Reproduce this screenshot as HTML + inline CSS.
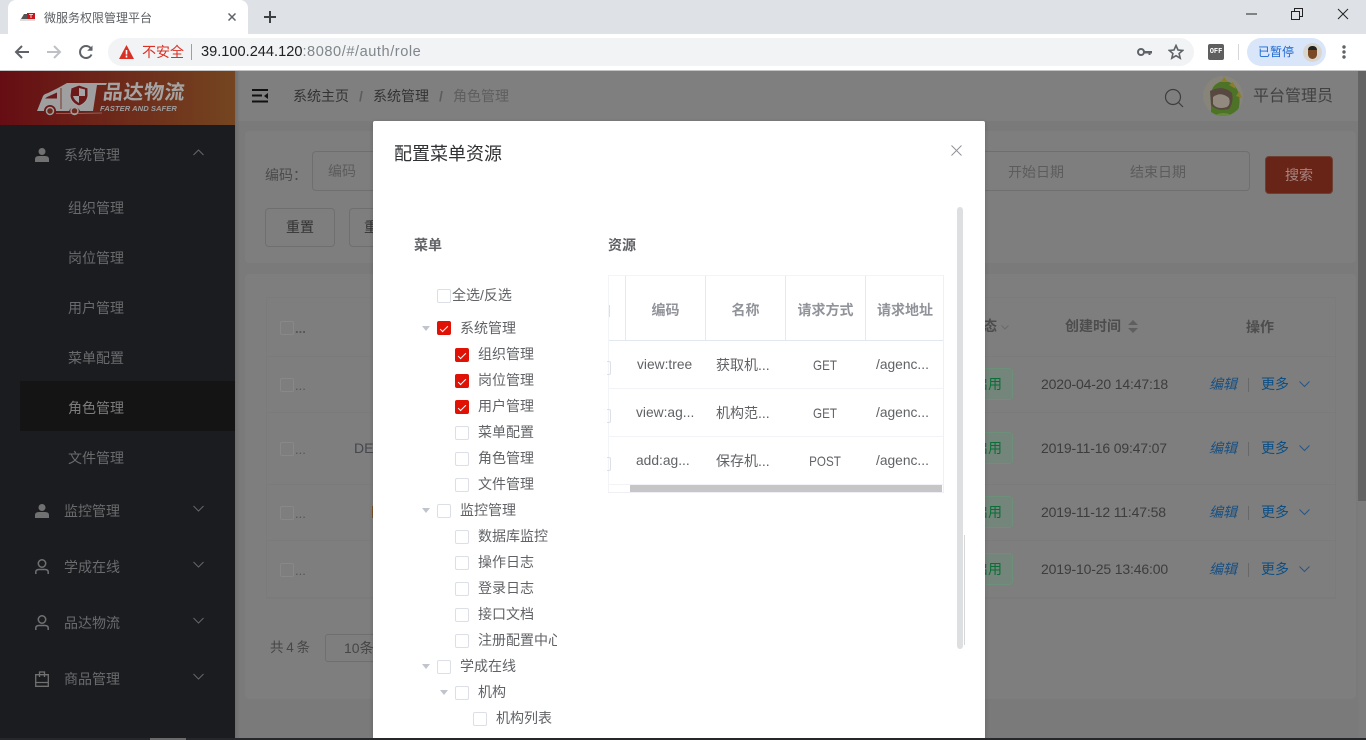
<!DOCTYPE html>
<html lang="zh-CN"><head><meta charset="utf-8"><title>微服务权限管理平台</title>
<style>
*{box-sizing:border-box}
html,body{margin:0;padding:0;width:1366px;height:740px;overflow:hidden;background:#7a7a7a;font-family:"Liberation Sans","Noto Sans CJK SC",sans-serif;font-size:14px}
.a{position:absolute;white-space:nowrap}
.t{position:absolute;white-space:nowrap;line-height:20px}
.side{color:#6a6b6d}
.cb{position:absolute;width:14px;height:14px;border:1px solid #dcdfe6;border-radius:2px;background:#fff}
.cb.on{background:#e01105;border-color:#e01105}
.cb.on:after{content:"";position:absolute;left:4px;top:1.5px;width:3px;height:7px;border:solid #fff;border-width:0 1px 1px 0;transform:rotate(45deg)}
.tr{position:absolute;width:0;height:0;border:4px solid transparent;border-top:5px solid #c0c4cc;border-bottom:0}
.tree{color:#606266;font-size:14px}
.th{color:#909399;font-weight:bold;text-align:center;font-size:14px}
.td{color:#606266;font-size:14px}
.l{font-size:13.8px}
.c{text-align:center;width:78px;font-size:14px;left:786px;transform:scaleX(.83)}
.bcb{position:absolute;width:14px;height:14px;border:1px solid #888;border-radius:2px}
.tag{position:absolute;left:960px;width:53px;height:32px;background:#74857b;border:1px solid #6c9079;border-radius:4px;color:#0a6e36;line-height:30px;text-align:right;padding-right:10px}
.dt{color:#3d3d3d;letter-spacing:-.16px}
.ed{color:#174f82;font-style:italic}
.mo{color:#0b4f85}
</style></head><body>
<!-- Chrome tab strip -->
<div class="a" style="left:0;top:0;width:1366px;height:34px;background:#dee1e6"></div>
<div class="a" style="left:8px;top:0;width:240px;height:34px;background:#fff;border-radius:8px 8px 0 0"></div>
<svg class="a" style="left:20px;top:12px" width="16" height="9" viewBox="0 0 16 9"><path d="M1 7L4 2H7V7Z" fill="#555"/><rect x="7" y="1" width="8" height="6" fill="#c8161d"/><path d="M9 2.500H13M11 2.500V6" stroke="#fff" stroke-width=".8"/><path d="M0 8H15" stroke="#bbb"/></svg>
<div class="t" style="left:44px;top:8px;font-size:12px;color:#5a5d62;line-height:20px">微服务权限管理平台</div>
<svg class="a" style="left:228px;top:13px" width="8" height="8"><path d="M.5 .5L7.500 7.500M7.500 .5L.5 7.500" stroke="#5f6368" stroke-width="1.500"/></svg>
<svg class="a" style="left:264px;top:11px" width="12" height="12"><path d="M6 0V12M0 6H12" stroke="#3c4043" stroke-width="2"/></svg>
<svg class="a" style="left:1246px;top:13px" width="12" height="2"><path d="M0 1H11" stroke="#222" stroke-width="1"/></svg>
<svg class="a" style="left:1291px;top:8px" width="12" height="12" fill="none" stroke="#222"><path d="M.5 3.500H8.500V11.500H.5ZM3.500 3.500V.5H11.500V8.500H8.500"/></svg>
<svg class="a" style="left:1337px;top:8px" width="12" height="12"><path d="M1 1L11 11M11 1L1 11" stroke="#222" stroke-width="1"/></svg>
<!-- Toolbar -->
<div class="a" style="left:0;top:34px;width:1366px;height:36px;background:#fff"></div>
<div class="a" style="left:0;top:70px;width:1366px;height:1px;background:#c4c4c4"></div>
<svg class="a" style="left:14px;top:44px" width="16" height="16" fill="none" stroke="#5f6368" stroke-width="2"><path d="M15 8H2M8 2L2 8L8 14"/></svg>
<svg class="a" style="left:46px;top:44px" width="16" height="16" fill="none" stroke="#bdc1c6" stroke-width="2"><path d="M1 8H14M8 2L14 8L8 14"/></svg>
<svg class="a" style="left:78px;top:44px" width="16" height="16" fill="none" stroke="#5f6368" stroke-width="2"><path d="M13.500 10.500A6 6 0 1 1 12.500 4L14 5.500"/><path d="M14.500 1.500V6.800H9.200Z" fill="#5f6368" stroke="none"/></svg>
<div class="a" style="left:108px;top:38px;width:1086px;height:28px;background:#f1f3f4;border-radius:14px"></div>
<svg class="a" style="left:119px;top:45px" width="15" height="14"><path d="M7.500 0L15 14H0Z" fill="#d93025"/><path d="M7.500 5V9.500M7.500 10.500V12.500" stroke="#fff" stroke-width="1.600"/></svg>
<div class="t" style="left:142px;top:42px;color:#d93025;font-size:14px">不安全</div>
<div class="a" style="left:191px;top:44px;width:1px;height:16px;background:#9aa0a6"></div>
<div class="t" style="left:201px;top:42px;font-size:14.600px;color:#80868b"><span style="color:#202124">39.100.244.120</span><span style="letter-spacing:.55px">:8080/#/auth/role</span></div>
<svg class="a" style="left:1137px;top:47px" width="15" height="10"><circle cx="4" cy="5" r="3" fill="none" stroke="#5f6368" stroke-width="2"/><path d="M6 4H15V6.500H13.500V8H11.500V6.500H6Z" fill="#5f6368"/></svg>
<svg class="a" style="left:1168px;top:44px" width="16" height="16" fill="none" stroke="#5f6368" stroke-width="1.600"><path d="M8 1.500L10 6L14.700 6.400L11.100 9.500L12.200 14.200L8 11.700L3.800 14.200L4.900 9.500L1.300 6.400L6 6Z"/></svg>
<div class="a" style="left:1208px;top:44px;width:16px;height:16px;background:#5f5f5f;border-radius:2px;color:#fff;font:bold 7px/16px 'Liberation Mono',monospace;text-align:center">OFF</div>
<div class="a" style="left:1238px;top:44px;width:1px;height:16px;background:#d5d7da"></div>
<div class="a" style="left:1247px;top:38px;width:79px;height:28px;background:#d9e6f9;border-radius:14px"></div>
<div class="t" style="left:1258px;top:42px;font-size:12px;color:#1a66d4">已暂停</div>
<div class="a" style="left:1303px;top:43px;width:19px;height:19px;border-radius:50%;background:#d9d6d0;overflow:hidden"><div class="a" style="left:5px;top:4px;width:9px;height:12px;background:#7a4a25;border-radius:4px 4px 5px 5px"></div><div class="a" style="left:5px;top:3px;width:9px;height:4px;background:#222;border-radius:4px 4px 0 0"></div></div>
<svg class="a" style="left:1342px;top:44px" width="4" height="16" fill="#5f6368"><circle cx="2" cy="3" r="1.700"/><circle cx="2" cy="8" r="1.700"/><circle cx="2" cy="13" r="1.700"/></svg>

<!-- Page behind mask -->
<div class="a" style="left:235px;top:71px;width:1131px;height:667px;background:#7a7a7a"></div>
<div class="a" style="left:235px;top:71px;width:1123px;height:50px;background:#7f7f7f"></div>
<div class="a" style="left:245px;top:131px;width:1111px;height:132px;background:#7e7e7e;border-radius:4px"></div>
<div class="a" style="left:245px;top:274px;width:1111px;height:425px;background:#7e7e7e;border-radius:4px"></div>
<div class="a" style="left:235px;top:71px;width:5px;height:667px;background:linear-gradient(90deg,#6e6e6e,rgba(122,122,122,0))"></div>
<div class="a" style="left:1358px;top:71px;width:8px;height:430px;background:#636363"></div>
<div class="a" style="left:1358px;top:501px;width:8px;height:237px;background:#7c7c7c"></div>
<!-- Top bar contents -->
<svg class="a" style="left:252px;top:89px" width="17" height="14"><path d="M0 1H16M0 6.500H10M0 12.500H16" stroke="#111" stroke-width="2"/><path d="M16 4V10L12 7Z" fill="#111"/></svg>
<div class="t" style="left:293px;top:86px;color:#333">系统主页</div>
<div class="t" style="left:359px;top:86px;color:#5c5c5c;font-weight:bold">/</div>
<div class="t" style="left:373px;top:86px;color:#333">系统管理</div>
<div class="t" style="left:439px;top:86px;color:#5c5c5c;font-weight:bold">/</div>
<div class="t" style="left:453px;top:86px;color:#5e5e5e">角色管理</div>
<svg class="a" style="left:1164px;top:88px" width="20" height="20" fill="none" stroke="#3e3e3e" stroke-width="1.200"><circle cx="9" cy="9" r="7.500"/><path d="M14.500 14.500L19 19"/></svg>
<svg class="a" style="left:1203px;top:76px" width="40" height="40" viewBox="0 0 40 40"><defs><clipPath id="av"><circle cx="20" cy="20" r="20"/></clipPath></defs><g clip-path="url(#av)"><rect width="40" height="40" fill="#87857a"/><path d="M8 40V22Q7 8 20 5Q32 5 36 18Q38 30 33 40Z" fill="#4d7426"/><path d="M21 1L25 6H18ZM30 6L33 13L26 9ZM36 15L39 22L33 20Z" fill="#8a7d2c"/><path d="M7 15Q20 8 29 17Q31 26 26 33Q14 36 8 29Z" fill="#57493f"/><path d="M10 21Q18 15 26 22Q28 28 24 31Q14 34 10 28Z" fill="#938a7f"/><path d="M11 40Q20 34 30 40Z" fill="#66883a"/></g></svg>
<div class="t" style="left:1253px;top:85px;font-size:16px;color:#414141;line-height:24px">平台管理员</div>
<!-- Search -->
<div class="t" style="left:265px;top:165px;color:#4b4b4b">编码：</div>
<div class="a" style="left:312px;top:151px;width:80px;height:40px;border:1px solid #6f6f6f;border-right:0;border-radius:4px 0 0 4px"></div>
<div class="t" style="left:328px;top:161px;color:#5c5c5c">编码</div>
<div class="a" style="left:980px;top:151px;width:270px;height:40px;border:1px solid #6f6f6f;border-left:0;border-radius:0 4px 4px 0"></div>
<div class="t" style="left:1008px;top:162px;color:#5c5c5c">开始日期</div>
<div class="t" style="left:1130px;top:162px;color:#5c5c5c">结束日期</div>
<div class="a" style="left:1265px;top:156px;width:68px;height:38px;background:#682517;border:1px solid #6e3f33;border-radius:4px;color:#a98480;text-align:center;line-height:36px">搜索</div>
<div class="a" style="left:265px;top:208px;width:70px;height:39px;border:1px solid #6f6f6f;border-radius:4px;color:#333;text-align:center;line-height:37px">重置</div>
<div class="a" style="left:349px;top:208px;width:40px;height:39px;border:1px solid #6f6f6f;border-radius:4px 0 0 4px;border-right:0;color:#333;padding-left:14px;line-height:37px;overflow:hidden">重置</div>
<!-- Data table -->
<div class="a" style="left:266px;top:297px;width:1070px;height:302px;border:1px solid #7b7b7b;border-width:1px 1px 2px 1px"></div>
<div class="a" style="left:266px;top:356px;width:1070px;height:1px;background:#7b7b7b"></div>
<div class="a" style="left:266px;top:412px;width:1070px;height:1px;background:#7b7b7b"></div>
<div class="a" style="left:266px;top:484px;width:1070px;height:1px;background:#7b7b7b"></div>
<div class="a" style="left:266px;top:540px;width:1070px;height:1px;background:#7b7b7b"></div>
<div class="bcb" style="left:280px;top:321px"></div><div class="t" style="left:295px;top:319px;color:#555;font-weight:bold;font-size:13px">...</div>
<div class="bcb" style="left:280px;top:378px"></div><div class="t" style="left:295px;top:376px;color:#555;font-size:13px">...</div>
<div class="bcb" style="left:280px;top:442px"></div><div class="t" style="left:295px;top:440px;color:#555;font-size:13px">...</div>
<div class="bcb" style="left:280px;top:506px"></div><div class="t" style="left:295px;top:504px;color:#555;font-size:13px">...</div>
<div class="bcb" style="left:280px;top:563px"></div><div class="t" style="left:295px;top:561px;color:#555;font-size:13px">...</div>
<div class="t" style="left:354px;top:438px;color:#45474d">DE</div>
<div class="a" style="left:372px;top:506px;width:1px;height:12px;background:#7a5226"></div>
<div class="t" style="left:983px;top:316px;color:#4d4d4d;font-weight:bold">态</div>
<svg class="a" style="left:1001px;top:325px" width="8" height="5" fill="none" stroke="#6a6a6a"><path d="M.5 .5L4 4L7.500 .5"/></svg>
<div class="t" style="left:1065px;top:316px;color:#4d4d4d;font-weight:bold">创建时间</div>
<svg class="a" style="left:1128px;top:320px" width="10" height="13" fill="#5f5f5f"><path d="M5 0L10 5H0ZM5 13L0 8H10Z"/></svg>
<div class="t" style="left:1246px;top:317px;color:#4d4d4d;font-weight:bold">操作</div>
<div class="tag" style="top:368px">启用</div>
<div class="tag" style="top:432px">启用</div>
<div class="tag" style="top:496px">启用</div>
<div class="tag" style="top:553px">启用</div>
<div class="t dt" style="left:1041px;top:374px">2020-04-20 14:47:18</div>
<div class="t dt" style="left:1041px;top:438px">2019-11-16 09:47:07</div>
<div class="t dt" style="left:1041px;top:502px">2019-11-12 11:47:58</div>
<div class="t dt" style="left:1041px;top:559px">2019-10-25 13:46:00</div>
<div class="t ed" style="left:1209px;top:374px">编辑</div><div class="a" style="left:1248px;top:378px;width:1px;height:14px;background:#686868"></div><div class="t mo" style="left:1261px;top:374px">更多</div><svg class="a" style="left:1299px;top:381px" width="11" height="7" fill="none" stroke="#2a5585"><path d="M.5 .5L5.500 5.500L10.500 .5"/></svg>
<div class="t ed" style="left:1209px;top:438px">编辑</div><div class="a" style="left:1248px;top:442px;width:1px;height:14px;background:#686868"></div><div class="t mo" style="left:1261px;top:438px">更多</div><svg class="a" style="left:1299px;top:445px" width="11" height="7" fill="none" stroke="#2a5585"><path d="M.5 .5L5.500 5.500L10.500 .5"/></svg>
<div class="t ed" style="left:1209px;top:502px">编辑</div><div class="a" style="left:1248px;top:506px;width:1px;height:14px;background:#686868"></div><div class="t mo" style="left:1261px;top:502px">更多</div><svg class="a" style="left:1299px;top:509px" width="11" height="7" fill="none" stroke="#2a5585"><path d="M.5 .5L5.500 5.500L10.500 .5"/></svg>
<div class="t ed" style="left:1209px;top:559px">编辑</div><div class="a" style="left:1248px;top:563px;width:1px;height:14px;background:#686868"></div><div class="t mo" style="left:1261px;top:559px">更多</div><svg class="a" style="left:1299px;top:566px" width="11" height="7" fill="none" stroke="#2a5585"><path d="M.5 .5L5.500 5.500L10.500 .5"/></svg>
<div class="t" style="left:270px;top:638px;color:#464646;word-spacing:-1px;font-size:13.5px">共 4 条</div>
<div class="a" style="left:325px;top:634px;width:60px;height:28px;border:1px solid #6f6f6f;border-radius:3px;color:#464646;padding-left:18px;line-height:27px">10条</div>

<!-- Sidebar -->
<div class="a" style="left:0;top:71px;width:235px;height:667px;background:#1b1c20"></div>
<div class="a" style="left:0;top:71px;width:235px;height:54px;background:linear-gradient(90deg,#660d13,#744520)"></div>
<svg class="a" style="left:36px;top:80px" width="74" height="36" viewBox="0 0 74 36"><path d="M1 31L7 16Q8 14 12 13L22 8L31 3H71L70 5H61L57 31H44A6 6 0 0 0 33 31H20A6 6 0 0 0 8 31Z" fill="#9f9f9f"/><path d="M11 17L21 12.500V18.500H9Z" fill="#6a1a1a"/><path d="M25 8V29" stroke="#7a3a28" stroke-width="1"/><path d="M35 8L43 5L52 8V16Q51 23 43 26Q35 23 34 16Z" fill="#6c1919" stroke="#a5a5a5"/><path d="M43 8V16H37Q38 20 43 23V16H49V9.500Z" fill="#a5a5a5"/><circle cx="14" cy="31" r="3.500" fill="#6d2a1c" stroke="#a0a0a0" stroke-width="1.500"/><circle cx="38.500" cy="31" r="3.500" fill="#6d2a1c" stroke="#a0a0a0" stroke-width="1.500"/><path d="M20 33.500L66 33" stroke="#a0a0a0" stroke-width=".6"/></svg>
<div class="t" style="left:103px;top:82px;font-size:20px;font-weight:bold;color:#a4a4a4;line-height:22px;letter-spacing:.5px;transform:skewX(-6deg)">品达物流</div>
<div class="t" style="left:100px;top:104px;font-size:7.600px;font-weight:bold;font-style:italic;color:#9e9e9e;line-height:10px;letter-spacing:.05px">FASTER AND SAFER</div>
<div class="a" style="left:20px;top:381px;width:215px;height:50px;background:#141414"></div>
<svg class="a" style="left:35px;top:148px" width="14" height="14" fill="#717171"><circle cx="7" cy="3.500" r="3.500"/><path d="M0 14V11Q0 8 4 8H10Q14 8 14 11V14Z"/></svg>
<div class="t side" style="left:64px;top:145px">系统管理</div>
<svg class="a" style="left:193px;top:149px" width="11" height="7" fill="none" stroke="#666"><path d="M.5 6L5.500 1L10.500 6"/></svg>
<div class="t side" style="left:68px;top:198px">组织管理</div>
<div class="t side" style="left:68px;top:248px">岗位管理</div>
<div class="t side" style="left:68px;top:298px">用户管理</div>
<div class="t side" style="left:68px;top:348px">菜单配置</div>
<div class="t" style="left:68px;top:398px;color:#7c7c7c">角色管理</div>
<div class="t side" style="left:68px;top:448px">文件管理</div>
<svg class="a" style="left:35px;top:504px" width="14" height="14" fill="#717171"><circle cx="7" cy="3.500" r="3.500"/><path d="M0 14V11Q0 8 4 8H10Q14 8 14 11V14Z"/></svg>
<div class="t side" style="left:64px;top:501px">监控管理</div>
<svg class="a" style="left:193px;top:505px" width="11" height="7" fill="none" stroke="#666"><path d="M.5 1L5.500 6L10.500 1"/></svg>
<svg class="a" style="left:35px;top:559px" width="14" height="16" fill="none" stroke="#717171" stroke-width="1.500"><circle cx="7" cy="4.500" r="3.700"/><path d="M.8 15V13Q.8 10.500 4 10.500H10Q13.200 10.500 13.200 13V15"/></svg>
<div class="t side" style="left:64px;top:557px">学成在线</div>
<svg class="a" style="left:193px;top:561px" width="11" height="7" fill="none" stroke="#666"><path d="M.5 1L5.500 6L10.500 1"/></svg>
<svg class="a" style="left:35px;top:615px" width="14" height="16" fill="none" stroke="#717171" stroke-width="1.500"><circle cx="7" cy="4.500" r="3.700"/><path d="M.8 15V13Q.8 10.500 4 10.500H10Q13.200 10.500 13.200 13V15"/></svg>
<div class="t side" style="left:64px;top:613px">品达物流</div>
<svg class="a" style="left:193px;top:617px" width="11" height="7" fill="none" stroke="#666"><path d="M.5 1L5.500 6L10.500 1"/></svg>
<svg class="a" style="left:35px;top:671px" width="14" height="16" fill="none" stroke="#717171" stroke-width="1.300"><path d="M.7 3.700H13.300V15.300H.7ZM.7 11.500H13.300M4.500 6V1H9.500V6"/></svg>
<div class="t side" style="left:64px;top:669px">商品管理</div>
<svg class="a" style="left:193px;top:673px" width="11" height="7" fill="none" stroke="#666"><path d="M.5 1L5.500 6L10.500 1"/></svg>

<!-- Modal -->
<div class="a" style="left:373px;top:121px;width:612px;height:617px;background:#fff;border-radius:2px 2px 0 0;box-shadow:0 1px 4px rgba(0,0,0,.2)"></div>
<div class="t" style="left:394px;top:142px;font-size:18px;line-height:24px;color:#303133">配置菜单资源</div>
<svg class="a" style="left:951px;top:145px" width="11" height="11"><path d="M.5 .5L10.500 10.500M10.500 .5L.5 10.500" stroke="#909399"/></svg>
<div class="a" style="left:957px;top:207px;width:6px;height:442px;background:#dedfe1;border-radius:3px"></div>
<div class="a" style="left:964px;top:535px;width:1px;height:110px;background:#d6d7d9"></div>
<div class="t" style="left:414px;top:235px;font-size:14px;font-weight:bold;color:#606266">菜单</div>
<div class="t" style="left:608px;top:235px;font-size:14px;font-weight:bold;color:#606266">资源</div>
<!-- Tree -->
<div class="cb" style="left:437px;top:289px"></div><div class="t" style="left:452px;top:285px;color:#606266;font-size:14px">全选/反选</div>
<div class="tr" style="left:422px;top:326px"></div><div class="cb on" style="left:437px;top:321px"></div><div class="t tree" style="left:460px;top:318px">系统管理</div>
<div class="cb on" style="left:455px;top:348px"></div><div class="t tree" style="left:478px;top:344px">组织管理</div>
<div class="cb on" style="left:455px;top:374px"></div><div class="t tree" style="left:478px;top:370px">岗位管理</div>
<div class="cb on" style="left:455px;top:400px"></div><div class="t tree" style="left:478px;top:396px">用户管理</div>
<div class="cb" style="left:455px;top:426px"></div><div class="t tree" style="left:478px;top:422px">菜单配置</div>
<div class="cb" style="left:455px;top:452px"></div><div class="t tree" style="left:478px;top:448px">角色管理</div>
<div class="cb" style="left:455px;top:478px"></div><div class="t tree" style="left:478px;top:474px">文件管理</div>
<div class="tr" style="left:422px;top:508px"></div><div class="cb" style="left:437px;top:504px"></div><div class="t tree" style="left:460px;top:500px">监控管理</div>
<div class="cb" style="left:455px;top:530px"></div><div class="t tree" style="left:478px;top:526px">数据库监控</div>
<div class="cb" style="left:455px;top:556px"></div><div class="t tree" style="left:478px;top:552px">操作日志</div>
<div class="cb" style="left:455px;top:582px"></div><div class="t tree" style="left:478px;top:578px">登录日志</div>
<div class="cb" style="left:455px;top:608px"></div><div class="t tree" style="left:478px;top:604px">接口文档</div>
<div class="cb" style="left:455px;top:634px"></div><div class="t tree" style="left:478px;top:630px;width:79px;overflow:hidden">注册配置中心</div>
<div class="tr" style="left:422px;top:664px"></div><div class="cb" style="left:437px;top:660px"></div><div class="t tree" style="left:460px;top:656px">学成在线</div>
<div class="tr" style="left:440px;top:690px"></div><div class="cb" style="left:455px;top:686px"></div><div class="t tree" style="left:478px;top:682px">机构</div>
<div class="cb" style="left:473px;top:712px"></div><div class="t tree" style="left:496px;top:708px">机构列表</div>
<!-- Resource table -->
<div class="a" style="left:608px;top:275px;width:336px;height:1px;background:#f3f4f8"></div>
<div class="a" style="left:608px;top:275px;width:1px;height:218px;background:#f3f4f8"></div>
<div class="a" style="left:943px;top:275px;width:1px;height:218px;background:#eef0f5"></div>
<div class="a" style="left:608px;top:492px;width:336px;height:1px;background:#eef0f5"></div>
<div class="a" style="left:609px;top:340px;width:334px;height:1px;background:#e3e7ee"></div>
<div class="a" style="left:609px;top:388px;width:334px;height:1px;background:#f2f3f7"></div>
<div class="a" style="left:609px;top:436px;width:334px;height:1px;background:#f2f3f7"></div>
<div class="a" style="left:609px;top:484px;width:334px;height:1px;background:#f2f3f7"></div>
<div class="a" style="left:625px;top:276px;width:1px;height:64px;background:#e6e9f0"></div>
<div class="a" style="left:705px;top:276px;width:1px;height:64px;background:#e6e9f0"></div>
<div class="a" style="left:785px;top:276px;width:1px;height:64px;background:#e6e9f0"></div>
<div class="a" style="left:865px;top:276px;width:1px;height:64px;background:#e6e9f0"></div>
<div class="a" style="left:609px;top:305px;width:1px;height:12px;background:#dcdfe6"></div>
<div class="a" style="left:607px;top:361px;width:4px;height:14px;border:1px solid #dcdfe6;border-left:0;border-radius:0 2px 2px 0"></div>
<div class="a" style="left:607px;top:409px;width:4px;height:14px;border:1px solid #dcdfe6;border-left:0;border-radius:0 2px 2px 0"></div>
<div class="a" style="left:607px;top:457px;width:4px;height:14px;border:1px solid #dcdfe6;border-left:0;border-radius:0 2px 2px 0"></div>
<div class="t th" style="left:626px;top:300px;width:79px">编码</div>
<div class="t th" style="left:706px;top:300px;width:79px">名称</div>
<div class="t th" style="left:786px;top:300px;width:79px">请求方式</div>
<div class="t th" style="left:866px;top:300px;width:78px">请求地址</div>
<div class="t td l" style="left:637px;top:355px">view:tree</div>
<div class="t td l" style="left:636px;top:403px">view:ag...</div>
<div class="t td l" style="left:636px;top:451px">add:ag...</div>
<div class="t td" style="left:716px;top:355px">获取机...</div>
<div class="t td" style="left:716px;top:403px">机构范...</div>
<div class="t td" style="left:716px;top:451px">保存机...</div>
<div class="t td c" style="top:355px">GET</div>
<div class="t td c" style="top:403px">GET</div>
<div class="t td c" style="top:451px">POST</div>
<div class="t td l" style="left:876px;top:355px">/agenc...</div>
<div class="t td l" style="left:876px;top:403px">/agenc...</div>
<div class="t td l" style="left:876px;top:451px">/agenc...</div>
<div class="a" style="left:630px;top:485px;width:312px;height:7px;background:#c6c6c6"></div>

<!-- Bottom edge -->
<div class="a" style="left:0;top:738px;width:1366px;height:2px;background:#26272b"></div>
<div class="a" style="left:150px;top:738px;width:36px;height:2px;background:#6a6a6a"></div>
</body></html>
